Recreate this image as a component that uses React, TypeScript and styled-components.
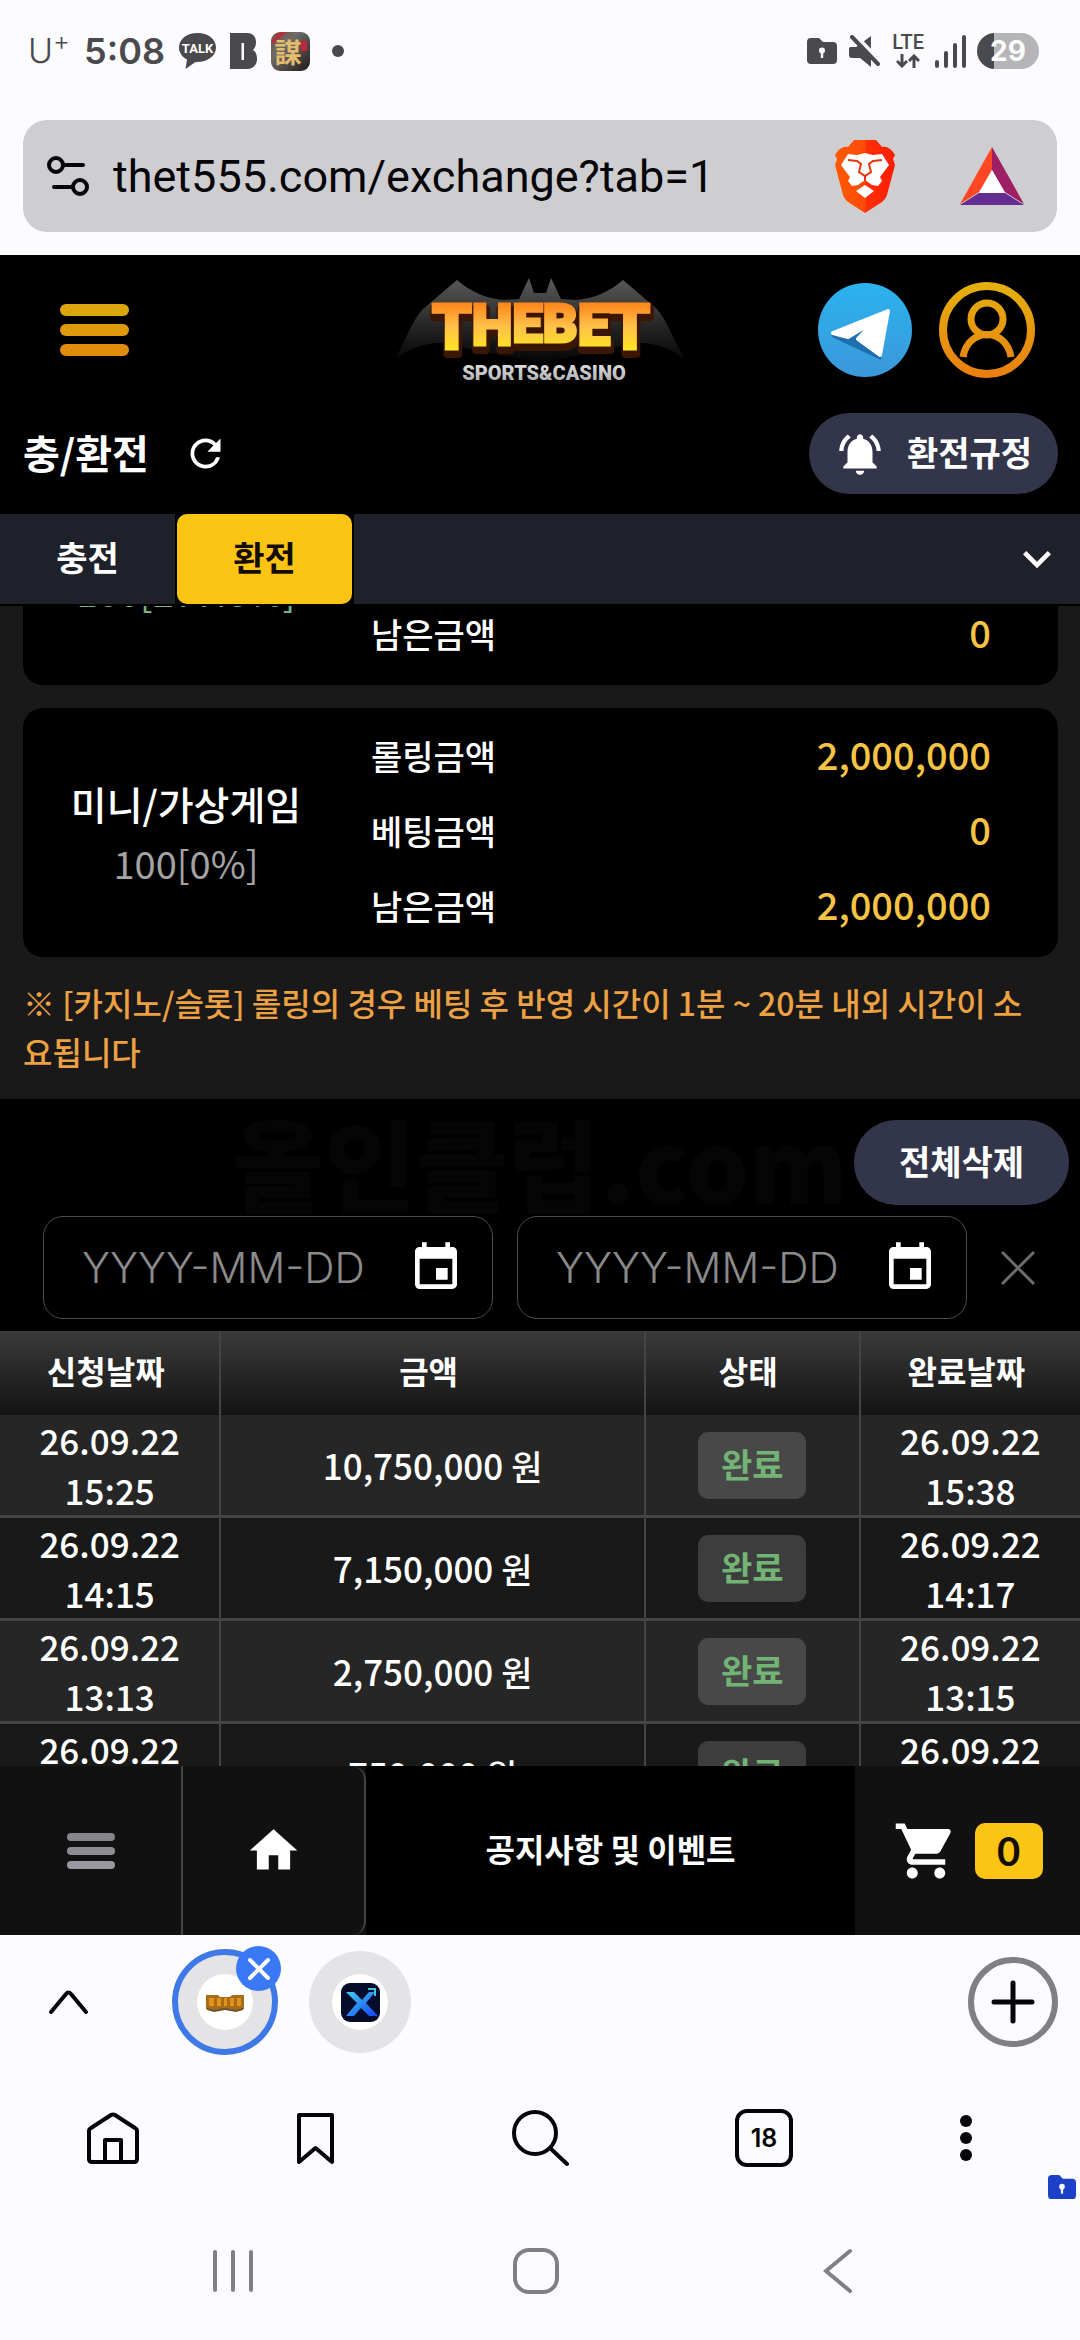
import React, { useLayoutEffect, useRef, useState } from 'react';
import styled, { createGlobalStyle } from 'styled-components';
import {
  MdEvent,
  MdExpandMore,
  MdHome,
  MdNotificationsActive,
  MdRefresh,
  MdShoppingCart,
} from 'react-icons/md';

const GlobalStyle = createGlobalStyle`
  *, *::before, *::after {
    box-sizing: border-box;
  }

  body {
    margin: 0;
    background: #fcfcfe;
    font-family: "Noto Sans CJK KR", sans-serif;
  }

  button {
    background: none;
    border: none;
    padding: 0;
    margin: 0;
    color: inherit;
    font: inherit;
    cursor: pointer;
  }

  svg {
    display: block;
    flex-shrink: 0;
  }
`;

const Screen = styled.div`
  display: flex;
  flex-direction: column;
  height: 100vh;
  overflow: hidden;
  background: #fcfcfe;
`;

/* ---------- phone status bar ---------- */

const StatusBar = styled.div`
  display: flex;
  align-items: center;
  justify-content: space-between;
  flex-shrink: 0;
  height: 102px;
  padding: 0 41px 0 28px;
  color: #4a4a4c;
  font-family: Inter, sans-serif;
`;

const StatusGroup = styled.div<{ $gap: number }>`
  display: flex;
  align-items: center;
  gap: ${props => props.$gap}px;
`;

const Carrier = styled.span`
  display: flex;
  font-size: 34px;
  font-weight: 300;
  line-height: 40px;

  sup {
    font-size: 26px;
    line-height: 20px;
    vertical-align: top;
  }
`;

const Time = styled.span`
  font-size: 36px;
  font-weight: 600;
  line-height: 40px;
`;

const Network = styled.div`
  display: flex;
  flex-direction: column;
  align-items: center;
  gap: 4px;
  font-family: Roboto, sans-serif;
  font-size: 20px;
  font-weight: 500;
  line-height: 16px;
`;

const Battery = styled.div`
  display: flex;
  align-items: center;
  justify-content: center;
  width: 62px;
  height: 36px;
  border-radius: 18px;
  background: linear-gradient(to right, #4a4a4c 28%, #b5b5b7 28%);
  color: #fcfcfe;
  font-size: 28px;
  font-weight: 700;
`;

/* ---------- browser address bar ---------- */

const AddressBar = styled.div`
  flex-shrink: 0;
  padding: 18px 23px 23px;
`;

const AddressField = styled.div`
  display: flex;
  align-items: center;
  height: 112px;
  padding: 0 33px 0 24px;
  border-radius: 24px;
  background: #cecdd0;
`;

const AddressInput = styled.input`
  flex: 1;
  min-width: 0;
  margin-left: 23px;
  padding: 0;
  border: none;
  outline: none;
  background: none;
  color: #050507;
  font-family: Roboto, sans-serif;
  font-size: 45px;
`;

const AddressActions = styled.div`
  display: flex;
  align-items: center;
  gap: 64px;
`;

/* ---------- site header ---------- */

const Site = styled.div`
  display: flex;
  flex: 1;
  flex-direction: column;
  min-height: 0;
  background: #000000;
  color: #ffffff;
`;

const SiteHeader = styled.header`
  display: grid;
  grid-template-columns: 1fr auto 1fr;
  align-items: center;
  flex-shrink: 0;
  height: 150px;
  padding: 0 44px;
`;

const Bars = styled.span<{ $large?: boolean }>`
  display: flex;
  flex-direction: column;
  gap: ${props => (props.$large ? 8 : 6)}px;
  width: ${props => (props.$large ? 69 : 48)}px;

  i {
    height: ${props => (props.$large ? 12 : 8)}px;
    border-radius: 6px;
    background: #8d8d92;
  }

  i:nth-child(1) {
    background: ${props => (props.$large ? '#dba50d' : '#85858a')};
  }

  i:nth-child(2) {
    background: ${props => (props.$large ? '#de9a0c' : '#8d8d92')};
  }

  i:nth-child(3) {
    background: ${props => (props.$large ? '#e08c0c' : '#98989e')};
  }
`;

const MenuButton = styled.button`
  justify-self: start;
  margin-left: 16px;
`;

const HeaderLinks = styled.div`
  display: flex;
  align-items: center;
  justify-self: end;
  gap: 26px;
`;

const TitleRow = styled.div`
  display: flex;
  align-items: center;
  flex-shrink: 0;
  height: 109px;
  padding: 8px 22px 20px 23px;
`;

const PageTitle = styled.h1`
  margin: 0;
  padding-bottom: 4px;
  font-size: 40px;
  font-weight: 700;
  line-height: 48px;
`;

const RefreshButton = styled.button`
  margin: 0 auto 0 34px;
`;

const Pill = styled.button<{ $width: number; $height: number }>`
  display: flex;
  align-items: center;
  justify-content: center;
  gap: 22px;
  width: ${props => props.$width}px;
  height: ${props => props.$height}px;
  border-radius: 42px;
  background: #33354a;
  color: #ffffff;
  font-size: 34px;
  font-weight: 700;

  span {
    padding-bottom: 4px;
  }
`;

const TabBar = styled.div`
  display: flex;
  gap: 2px;
  flex-shrink: 0;
  padding-bottom: 2px;
`;

const Tab = styled.button<{ $active?: boolean }>`
  width: 175px;
  height: 90px;
  padding-bottom: 6px;
  border-radius: ${props => (props.$active ? 10 : 0)}px;
  background: ${props => (props.$active ? '#fcc414' : '#1e202a')};
  color: ${props => (props.$active ? '#130d05' : '#ffffff')};
  font-size: 34px;
  font-weight: 700;
`;

const TabMore = styled.button`
  display: flex;
  flex: 1;
  align-items: center;
  justify-content: flex-end;
  padding-right: 15px;
  background: #1e202a;
`;

/* ---------- scrolled page ---------- */

const Scroller = styled.main`
  flex: 1;
  min-height: 0;
  overflow-y: auto;
  scrollbar-width: none;
`;

const RollingPanel = styled.section`
  display: flex;
  flex-direction: column;
  gap: 23px;
  padding: 23px 22px 21px 23px;
  background: #191919;
`;

const RollingCard = styled.article`
  display: flex;
  align-items: center;
  padding: 10px 67px 14px 0;
  border-radius: 20px;
  background: #000000;
`;

const RollingLabel = styled.div`
  width: 326px;
  padding-top: 4px;
  text-align: center;
  font-size: 39px;
  font-weight: 500;
  line-height: 60px;
`;

const RollingRate = styled.div<{ $complete: boolean }>`
  color: ${props => (props.$complete ? '#74b383' : '#a3a3a3')};
  font-size: 38px;
  font-weight: 400;
`;

const RollingList = styled.dl`
  flex: 1;
  margin: 0;
  padding-left: 22px;
`;

const RollingRow = styled.div`
  display: flex;
  align-items: center;
  justify-content: space-between;
  height: 75px;

  dt {
    font-size: 34px;
    font-weight: 500;
  }

  dd {
    margin: 0;
    padding-bottom: 4px;
    color: #f6c445;
    font-size: 38px;
    font-weight: 500;
  }
`;

const Notice = styled.p`
  margin: -2px 0 0;
  padding: 0 20px 2px 0;
  color: #eea143;
  font-size: 32px;
  font-weight: 500;
  line-height: 49px;
  word-break: break-all;
`;

const Filters = styled.section`
  position: relative;
  padding: 21px 11px 12px 43px;
`;

const Watermark = styled.span`
  position: absolute;
  top: 0;
  left: 232px;
  color: #050505;
  font-size: 100px;
  font-weight: 900;
  line-height: 124px;
  pointer-events: none;
`;

const FilterActions = styled.div`
  display: flex;
  justify-content: flex-end;
  position: relative;
  margin-bottom: 11px;
`;

const DateRange = styled.div`
  display: flex;
  align-items: center;
  gap: 24px;
  padding-right: 34px;
`;

const DateField = styled.label`
  display: flex;
  flex: 1;
  align-items: center;
  gap: 44px;
  min-width: 0;
  height: 103px;
  padding: 0 28px 0 38px;
  border: 1px solid #4b4b4b;
  border-radius: 20px;

  input {
    flex: 1;
    min-width: 0;
    padding: 0;
    border: none;
    outline: none;
    background: none;
    color: #ffffff;
    font-family: Inter, sans-serif;
    font-size: 42px;
    font-weight: 300;
  }

  input::placeholder {
    color: #8a8a8a;
    opacity: 1;
  }
`;

const ClearButton = styled.button`
  margin-left: 10px;
`;

const HistoryTable = styled.table`
  width: 100%;
  table-layout: fixed;
  border-collapse: separate;
  border-spacing: 0;
  text-align: center;

  th,
  td {
    padding: 0;
    border-right: 2px solid #444444;
  }

  th:last-child,
  td:last-child {
    border-right: none;
  }

  th {
    height: 84px;
    padding: 0 8px 6px 0;
    font-size: 32px;
    font-weight: 700;
  }

  thead tr {
    background: linear-gradient(#3a3a3a, #141414);
  }

  tbody tr {
    background: #191919;
  }

  tbody tr:nth-child(odd) {
    background: #262626;
  }

  td {
    height: 103px;
    border-bottom: 3px solid #454545;
    font-size: 35px;
    font-weight: 500;
    line-height: 50px;
  }
`;

const Won = styled.span`
  font-size: 34px;
  line-height: 40px;
`;

const StateBadge = styled.span`
  display: inline-block;
  width: 108px;
  padding-bottom: 4px;
  border-radius: 10px;
  background: rgba(255, 255, 255, 0.16);
  color: #72b376;
  font-size: 34px;
  font-weight: 700;
  line-height: 63px;
  vertical-align: middle;
`;

/* ---------- site bottom bar ---------- */

const BottomNav = styled.nav`
  display: flex;
  flex-shrink: 0;
  height: 169px;
  background: #111111;
`;

const BottomItem = styled.button<{ $rounded?: boolean }>`
  display: flex;
  align-items: center;
  justify-content: center;
  width: 183px;
  border-right: 2px solid #444444;
  border-radius: ${props => (props.$rounded ? '0 14px 14px 0' : '0')};
`;

const NewsLink = styled.a`
  display: flex;
  flex: 1;
  align-items: center;
  justify-content: center;
  padding-bottom: 6px;
  background: #000000;
  color: #ffffff;
  font-size: 32px;
  font-weight: 700;
  text-decoration: none;
`;

const CartButton = styled.button`
  display: flex;
  align-items: center;
  justify-content: center;
  gap: 16px;
  width: 225px;
`;

const CartCount = styled.span`
  width: 68px;
  border-radius: 10px;
  background: #fcc414;
  color: #130d05;
  font-family: Lato, sans-serif;
  font-size: 40px;
  font-weight: 700;
  line-height: 56px;
`;

/* ---------- browser tabs and toolbar ---------- */

const TabStrip = styled.div`
  display: flex;
  align-items: center;
  flex-shrink: 0;
  height: 134px;
  padding: 0 22px 0 48px;
`;

const TabThumb = styled.button<{ $current?: boolean }>`
  display: flex;
  align-items: center;
  justify-content: center;
  position: relative;
  width: ${props => (props.$current ? 106 : 102)}px;
  height: ${props => (props.$current ? 106 : 102)}px;
  margin-left: ${props => (props.$current ? 83 : 31)}px;
  border: ${props => (props.$current ? '6px solid #3f79e8' : 'none')};
  border-radius: 50%;
  background: #e4e4e6;
`;

const Favicon = styled.span`
  display: flex;
  align-items: center;
  justify-content: center;
  width: 56px;
  height: 56px;
  border-radius: 50%;
  background: #ffffff;
`;

const CloseBadge = styled.span`
  display: flex;
  align-items: center;
  justify-content: center;
  position: absolute;
  top: -9px;
  right: -9px;
  width: 45px;
  height: 45px;
  border-radius: 50%;
  background: #3b78f5;
`;

const AddTab = styled.button`
  display: flex;
  align-items: center;
  justify-content: center;
  width: 90px;
  height: 90px;
  margin-left: auto;
  border: 6px solid #808083;
  border-radius: 50%;
`;

const Toolbar = styled.nav`
  display: grid;
  grid-template-columns: 226fr 178fr 272fr 176fr 228fr;
  place-items: center;
  position: relative;
  flex-shrink: 0;
  height: 138px;
`;

const TabCount = styled.span`
  display: flex;
  align-items: center;
  justify-content: center;
  width: 58px;
  height: 58px;
  border: 4px solid #050507;
  border-radius: 12px;
  font-family: Inter, sans-serif;
  font-size: 25px;
  font-weight: 600;
`;

const SecureMark = styled.span`
  position: absolute;
  right: 4px;
  bottom: 8px;
`;

const SystemNav = styled.nav`
  display: grid;
  grid-template-columns: 384fr 303fr 393fr;
  flex-shrink: 0;
  place-items: center;
  height: 133px;
  padding-bottom: 6px;

  button:first-child {
    margin-left: 82px;
  }

  button:last-child {
    margin-right: 92px;
  }
`;

interface RollingInfo {
  name: string;
  rate: string;
  complete: boolean;
  rolling: string;
  betting: string;
  remain: string;
}

interface Exchange {
  id: number;
  requested: [string, string];
  amount: string;
  completed: [string, string];
}

const rollings: RollingInfo[] = [
  { name: '스포츠', rate: '100[277.8%]', complete: true, rolling: '2,000,000', betting: '5,556,000', remain: '0' },
  { name: '미니/가상게임', rate: '100[0%]', complete: false, rolling: '2,000,000', betting: '0', remain: '2,000,000' },
];

const exchanges: Exchange[] = [
  { id: 1, requested: ['26.09.22', '15:25'], amount: '10,750,000', completed: ['26.09.22', '15:38'] },
  { id: 2, requested: ['26.09.22', '14:15'], amount: '7,150,000', completed: ['26.09.22', '14:17'] },
  { id: 3, requested: ['26.09.22', '13:13'], amount: '2,750,000', completed: ['26.09.22', '13:15'] },
  { id: 4, requested: ['26.09.22', '12:06'], amount: '750,000', completed: ['26.09.22', '12:08'] },
];

const LockedFolder: React.FC<{ color: string; width: number }> = ({ color, width }) => (
  <svg width={width} viewBox="0 0 30 26">
    <path d="M4 0h8l4 4h10a4 4 0 0 1 4 4v14a4 4 0 0 1-4 4H4a4 4 0 0 1-4-4V4a4 4 0 0 1 4-4z" fill={color} />
    <circle cx="15" cy="12.5" r="3" fill="#fcfcfe" />
    <path d="M13.8 13h2.4v7h-2.4z" fill="#fcfcfe" />
  </svg>
);

const TalkIcon = () => (
  <svg width="37" height="36" viewBox="0 0 37 36">
    <path d="M18.500 0C8 0 0 6 0 14.500c0 5 3 9.500 8 12L6.500 36l10-7c12 .5 20.500-6 20.500-14.500S29 0 18.500 0z" fill="#4a4a4c" />
    <text x="18.500" y="20" textAnchor="middle" fontFamily="Roboto" fontWeight="700" fontSize="13" fill="#fff">TALK</text>
  </svg>
);

const BandIcon = () => (
  <svg width="27" height="36" viewBox="0 0 27 36">
    <path d="M0 0h17c6 0 9 4 9 9 0 4-1 6-3 8 3 2 4 5 4 9 0 6-4 10-10 10H0z" fill="#4a4a4c" />
    <path d="M11.500 10h2.500v17h-2.500z" fill="#fcfcfe" />
  </svg>
);

const GameIcon = () => (
  <svg width="39" height="39" viewBox="0 0 39 39">
    <defs>
      <linearGradient id="game-bg" x1="0" y1="0" x2="1" y2="1">
        <stop offset="0" stopColor="#7b4a42" />
        <stop offset="0.350" stopColor="#6f6c66" />
        <stop offset="1" stopColor="#1d1a1a" />
      </linearGradient>
    </defs>
    <rect width="39" height="39" rx="9" fill="url(#game-bg)" />
    <path d="M0 9l9-9h7L1 12z" fill="#b3303a" />
    <rect x="30" y="9" width="6" height="10" fill="#c3263b" />
    <text x="17" y="31" textAnchor="middle" fontFamily="Noto Sans CJK JP" fontWeight="700" fontSize="27" fill="#e3bd6f">謀</text>
  </svg>
);

const MuteIcon = () => (
  <svg width="33" height="33" viewBox="0 0 33 33">
    <path d="M2 12h6l15-11v31l-11-9H4a3 3 0 0 1-3-3v-5a3 3 0 0 1 1-3z" fill="#4a4a4c" />
    <path d="M7 0l26 27" stroke="#fcfcfe" strokeWidth="4" />
    <path d="M4 2l26 27" stroke="#4a4a4c" strokeWidth="4" strokeLinecap="round" />
  </svg>
);

const SiteSettingsIcon = () => (
  <svg width="43" height="42" viewBox="0 0 43 42" fill="none" stroke="#050507" strokeWidth="4" strokeLinecap="round">
    <circle cx="9" cy="10" r="7" />
    <path d="M18 10h18M7 32h17" />
    <circle cx="33" cy="32" r="7" />
  </svg>
);

const BraveIcon = () => (
  <svg width="62" height="73" viewBox="0 0 62 73">
    <defs>
      <linearGradient id="brave" x1="0" x2="1" y1="0" y2="0">
        <stop offset="0" stopColor="#ff5a00" />
        <stop offset="0.500" stopColor="#ff4a0a" />
        <stop offset="0.520" stopColor="#ff2f08" />
        <stop offset="1" stopColor="#ff1c00" />
      </linearGradient>
    </defs>
    <path
      d="M20 0h22l6 7c4-1 8 1 11 5l2 3-2 4 2 6-8 30c-1 3-3 5-5 7L31 73 14 62c-2-2-4-4-5-7L1 25l2-6-2-4 2-3c3-4 7-6 11-5z"
      fill="url(#brave)"
    />
    <path
      d="M14 14l9 1 8-2 8 2 9-1 7 11-9 12 2 4-4 5-6-1-7-5-7 5-6 1-4-5 2-4L7 25z"
      fill="#fff"
    />
    <path d="M31 45l9 6-9 7-9-7z" fill="#fff" />
    <path d="M14 20l9 1 4 3-2 8 6 4 6-4-2-8 4-3 9-1" fill="none" stroke="#e8360c" strokeWidth="2" />
    <path d="M31 36v5" stroke="#e8360c" strokeWidth="2" />
  </svg>
);

const RewardsIcon = () => (
  <svg width="64" height="58" viewBox="0 0 64 58">
    <path d="M32 0L0 57l19-12 13-22z" fill="#ff4724" />
    <path d="M32 0l32 57-19-12-13-22z" fill="#9e1f63" />
    <path d="M0 58h64L45 46H19z" fill="#662d91" />
    <path d="M32 23l13 23H19z" fill="#fff" />
  </svg>
);

// Outer letters are larger, so the word bows downwards at both ends
const LogoWord = () => (
  <>
    <tspan fontSize="63">T</tspan>
    <tspan fontSize="58" dy="-4">H</tspan>
    <tspan fontSize="54" dy="-3">E</tspan>
    <tspan fontSize="54">B</tspan>
    <tspan fontSize="58" dy="3">E</tspan>
    <tspan fontSize="63" dy="4">T</tspan>
  </>
);

const Logo = () => (
  <svg width="290" height="106" viewBox="0 0 290 106" role="img" aria-label="THEBET SPORTS&amp;CASINO">
    <defs>
      <linearGradient id="wing" x1="0" y1="0" x2="0" y2="1">
        <stop offset="0" stopColor="#5a5a5a" />
        <stop offset="0.600" stopColor="#222222" />
        <stop offset="1" stopColor="#040404" />
      </linearGradient>
      <linearGradient id="gold" gradientUnits="userSpaceOnUse" x1="0" y1="22" x2="0" y2="76">
        <stop offset="0" stopColor="#ff7a10" />
        <stop offset="0.500" stopColor="#ffc04a" />
        <stop offset="1" stopColor="#ffe81f" />
      </linearGradient>
      <linearGradient id="steel" x1="0" y1="0" x2="0" y2="1">
        <stop offset="0" stopColor="#e6e6e6" />
        <stop offset="1" stopColor="#a5a5a8" />
      </linearGradient>
    </defs>
    <path
      d="M0 82C12 60 18 42 28 32L62 3c14 12 28 18 46 20l16-1 10-21 5 15h12l5-15 10 21 16 1c18-2 32-8 46-20l34 29c10 12 16 30 28 50-14-10-32-17-46-16l-99 20-99-20C32 65 14 72 0 82z"
      fill="url(#wing)"
    />
    <text
      x="147"
      y="77"
      textAnchor="middle"
      fontFamily="Roboto"
      fontWeight="900"
      stroke="#3a1603"
      strokeWidth="8"
      strokeLinejoin="round"
      fill="#3a1603"
      aria-hidden="true"
    >
      <LogoWord />
    </text>
    <text
      x="146"
      y="72"
      textAnchor="middle"
      fontFamily="Roboto"
      fontWeight="900"
      stroke="url(#gold)"
      strokeWidth="3"
      fill="url(#gold)"
    >
      <LogoWord />
    </text>
    <text
      x="149"
      y="103"
      textAnchor="middle"
      fontFamily="Roboto"
      fontWeight="900"
      fontSize="20"
      stroke="#000"
      strokeWidth="5"
      paintOrder="stroke"
      fill="url(#steel)"
    >
      SPORTS&amp;CASINO
    </text>
  </svg>
);

const TelegramIcon = () => (
  <svg width="94" height="94" viewBox="0 0 94 94">
    <defs>
      <linearGradient id="telegram" x1="0" y1="0" x2="0" y2="1">
        <stop offset="0" stopColor="#2bb3ee" />
        <stop offset="1" stopColor="#3a98da" />
      </linearGradient>
    </defs>
    <circle cx="47" cy="47" r="47" fill="url(#telegram)" />
    <path
      d="M15 53l15 4 26-18-16 19 22 17z"
      fill="#1f6fb0"
      stroke="#1f6fb0"
      strokeWidth="3"
      strokeLinejoin="round"
    />
    <path
      d="M15 50l55-22-8 44-22-16 18-19-28 17z"
      fill="#fff"
      stroke="#fff"
      strokeWidth="4"
      strokeLinejoin="round"
    />
  </svg>
);

const ProfileIcon = () => (
  <svg width="98" height="98" viewBox="0 0 98 98" fill="none">
    <defs>
      <linearGradient id="profile" gradientUnits="userSpaceOnUse" x1="0" y1="0" x2="0" y2="98">
        <stop offset="0" stopColor="#e3b20e" />
        <stop offset="1" stopColor="#ea7d10" />
      </linearGradient>
    </defs>
    <g stroke="url(#profile)">
      <circle cx="49" cy="49" r="44" strokeWidth="8" />
      <circle cx="49" cy="38" r="16" strokeWidth="7" />
      <path d="M25 76C30 46 68 46 73 76" strokeWidth="7" />
    </g>
  </svg>
);

function App() {
  const scroller = useRef<HTMLElement>(null);
  const [tab, setTab] = useState(1);
  const [from, setFrom] = useState('');
  const [to, setTo] = useState('');

  useLayoutEffect(() => {
    if (scroller.current) {
      scroller.current.scrollTop = 193;
    }
  }, []);

  return (
    <Screen>
      <GlobalStyle />

      <StatusBar>
        <StatusGroup $gap={14}>
          <Carrier>U<sup>+</sup></Carrier>
          <Time>5:08</Time>
          <TalkIcon />
          <BandIcon />
          <GameIcon />
          <svg width="36" height="12" viewBox="0 0 36 12"><circle cx="14" cy="6" r="6" fill="#4a4a4c" /></svg>
        </StatusGroup>
        <StatusGroup $gap={11}>
          <LockedFolder color="#4a4a4c" width={30} />
          <MuteIcon />
          <Network>
            LTE
            <svg width="24" height="14" viewBox="0 0 24 14" fill="none" stroke="#4a4a4c" strokeWidth="3">
              <path d="M6 0v12M1 7l5 5 5-5M18 14V2M13 7l5-5 5 5" />
            </svg>
          </Network>
          <svg width="31" height="33" viewBox="0 0 31 33" stroke="#4a4a4c" strokeWidth="4" strokeLinecap="round">
            <path d="M2 27v4M11 18v13M20 10v21M29 2v29" />
          </svg>
          <Battery>29</Battery>
        </StatusGroup>
      </StatusBar>

      <AddressBar>
        <AddressField>
          <SiteSettingsIcon />
          <AddressInput aria-label="주소" defaultValue="thet555.com/exchange?tab=1" />
          <AddressActions>
            <button aria-label="Brave Shields"><BraveIcon /></button>
            <button aria-label="Brave Rewards"><RewardsIcon /></button>
          </AddressActions>
        </AddressField>
      </AddressBar>

      <Site>
        <SiteHeader>
          <MenuButton aria-label="메뉴">
            <Bars $large><i /><i /><i /></Bars>
          </MenuButton>
          <Logo />
          <HeaderLinks>
            <button aria-label="텔레그램"><TelegramIcon /></button>
            <button aria-label="내 정보"><ProfileIcon /></button>
          </HeaderLinks>
        </SiteHeader>

        <TitleRow>
          <PageTitle>충/환전</PageTitle>
          <RefreshButton aria-label="새로고침"><MdRefresh size={45} /></RefreshButton>
          <Pill $width={249} $height={81}>
            <MdNotificationsActive size={50} />
            <span>환전규정</span>
          </Pill>
        </TitleRow>

        <TabBar>
          <Tab $active={tab === 0} onClick={() => setTab(0)}>충전</Tab>
          <Tab $active={tab === 1} onClick={() => setTab(1)}>환전</Tab>
          <TabMore aria-label="더보기"><MdExpandMore size={56} /></TabMore>
        </TabBar>

        <Scroller ref={scroller}>
          <RollingPanel>
            {rollings.map(item => (
              <RollingCard key={item.name}>
                <RollingLabel>
                  {item.name}
                  <RollingRate $complete={item.complete}>{item.rate}</RollingRate>
                </RollingLabel>
                <RollingList>
                  <RollingRow><dt>롤링금액</dt><dd>{item.rolling}</dd></RollingRow>
                  <RollingRow><dt>베팅금액</dt><dd>{item.betting}</dd></RollingRow>
                  <RollingRow><dt>남은금액</dt><dd>{item.remain}</dd></RollingRow>
                </RollingList>
              </RollingCard>
            ))}
            <Notice>
              ※ [카지노/슬롯] 롤링의 경우 베팅 후 반영 시간이 1분 ~ 20분 내외 시간이 소요됩니다
            </Notice>
          </RollingPanel>

          <Filters>
            <Watermark aria-hidden="true">올인클럽.com</Watermark>
            <FilterActions>
              <Pill $width={215} $height={85}><span>전체삭제</span></Pill>
            </FilterActions>
            <DateRange>
              <DateField>
                <input
                  aria-label="시작일"
                  placeholder="YYYY-MM-DD"
                  value={from}
                  onChange={e => setFrom(e.target.value)}
                />
                <MdEvent size={56} />
              </DateField>
              <DateField>
                <input
                  aria-label="종료일"
                  placeholder="YYYY-MM-DD"
                  value={to}
                  onChange={e => setTo(e.target.value)}
                />
                <MdEvent size={56} />
              </DateField>
              <ClearButton aria-label="지우기" onClick={() => { setFrom(''); setTo(''); }}>
                <svg width="34" height="34" viewBox="0 0 34 34" stroke="#6c6c6c" strokeWidth="3">
                  <path d="M1 1l32 32M33 1L1 33" />
                </svg>
              </ClearButton>
            </DateRange>
          </Filters>

          <HistoryTable>
            <colgroup>
              <col width="20.500%" />
              <col width="39.300%" />
              <col width="19.900%" />
              <col />
            </colgroup>
            <thead>
              <tr>
                <th>신청날짜</th>
                <th>금액</th>
                <th>상태</th>
                <th>완료날짜</th>
              </tr>
            </thead>
            <tbody>
              {exchanges.map(row => (
                <tr key={row.id}>
                  <td>{row.requested[0]}<br />{row.requested[1]}</td>
                  <td>{row.amount} <Won>원</Won></td>
                  <td><StateBadge>완료</StateBadge></td>
                  <td>{row.completed[0]}<br />{row.completed[1]}</td>
                </tr>
              ))}
            </tbody>
          </HistoryTable>
        </Scroller>

        <BottomNav>
          <BottomItem aria-label="전체 메뉴">
            <Bars><i /><i /><i /></Bars>
          </BottomItem>
          <BottomItem $rounded aria-label="홈"><MdHome size={57} /></BottomItem>
          <NewsLink href="#news">공지사항 및 이벤트</NewsLink>
          <CartButton aria-label="장바구니">
            <MdShoppingCart size={66} />
            <CartCount>0</CartCount>
          </CartButton>
        </BottomNav>
      </Site>

      <TabStrip>
        <button aria-label="탭 목록">
          <svg width="41" height="26" viewBox="0 0 41 26" fill="none" stroke="#050507" strokeWidth="4" strokeLinecap="round">
            <path d="M3 23L18 5q2.500-3 5 0l15 18" />
          </svg>
        </button>
        <TabThumb $current aria-label="THEBET">
          <Favicon>
            <svg width="40" height="19" viewBox="0 0 40 19">
              <path d="M1 2h12l2 2h10l2-2h12v14l-6 2-13-2-13 2-6-2z" fill="#a86c18" />
              <path d="M4 5h5v8H4zM12 5h4v8h-4zM19 5h3v8h-3zM25 5h4v8h-4zM32 5h4v8h-4z" fill="#e0921c" />
              <path d="M2 15l7 2 11-2 11 2 7-2v2l-7 2-11-2-11 2-7-2z" fill="#6b5236" />
            </svg>
          </Favicon>
          <CloseBadge>
            <svg width="24" height="24" viewBox="0 0 24 24" stroke="#fff" strokeWidth="4" strokeLinecap="round">
              <path d="M3 3l18 18M21 3L3 21" />
            </svg>
          </CloseBadge>
        </TabThumb>
        <TabThumb aria-label="X">
          <Favicon>
            <svg width="39" height="39" viewBox="0 0 39 39">
              <defs>
                <linearGradient id="x-mark" x1="0" y1="0" x2="1" y2="1">
                  <stop offset="0" stopColor="#3fd0f5" />
                  <stop offset="1" stopColor="#1440f0" />
                </linearGradient>
              </defs>
              <rect width="39" height="39" rx="9" fill="#050d2b" />
              <path d="M5 9h8l8 8 7-8h6L25 20l12 13h-9l-8-8-7 8H5l11-13z" fill="url(#x-mark)" />
              <path d="M27 6h7v7" fill="none" stroke="#3ec6e0" strokeWidth="2" />
            </svg>
          </Favicon>
        </TabThumb>
        <AddTab aria-label="새 탭">
          <svg width="44" height="44" viewBox="0 0 44 44" stroke="#050507" strokeWidth="5" strokeLinecap="round">
            <path d="M22 3v38M3 22h38" />
          </svg>
        </AddTab>
      </TabStrip>

      <Toolbar>
        <button aria-label="홈페이지">
          <svg width="52" height="52" viewBox="0 0 52 52" fill="none" stroke="#050507" strokeWidth="4" strokeLinejoin="round">
            <path d="M4 16q-2 1-2 3v28q0 3 3 3h42q3 0 3-3V19q0-2-2-3L28 3q-2-1-4 0zM18 50V28h16v22" />
          </svg>
        </button>
        <button aria-label="북마크">
          <svg width="37" height="52" viewBox="0 0 37 52" fill="none" stroke="#050507" strokeWidth="4" strokeLinejoin="round">
            <path d="M2 50V3h33v47L18.500 36z" />
          </svg>
        </button>
        <button aria-label="검색">
          <svg width="58" height="58" viewBox="0 0 58 58" fill="none" stroke="#050507" strokeWidth="4" strokeLinecap="round">
            <circle cx="24" cy="24" r="21" />
            <path d="M39 39l17 16" />
          </svg>
        </button>
        <button aria-label="탭 18개"><TabCount>18</TabCount></button>
        <button aria-label="더보기">
          <svg width="12" height="46" viewBox="0 0 12 46" fill="#050507">
            <circle cx="6" cy="6" r="6" />
            <circle cx="6" cy="23" r="6" />
            <circle cx="6" cy="40" r="6" />
          </svg>
        </button>
        <SecureMark><LockedFolder color="#1d40c8" width={28} /></SecureMark>
      </Toolbar>

      <SystemNav>
        <button aria-label="최근 앱">
          <svg width="42" height="44" viewBox="0 0 42 44" stroke="#808083" strokeWidth="4" strokeLinecap="round">
            <path d="M3 3v38M21 3v38M39 3v38" />
          </svg>
        </button>
        <button aria-label="홈 화면">
          <svg width="46" height="46" viewBox="0 0 46 46" fill="none" stroke="#808083" strokeWidth="4">
            <rect x="2" y="2" width="42" height="42" rx="14" />
          </svg>
        </button>
        <button aria-label="뒤로">
          <svg width="30" height="46" viewBox="0 0 30 46" fill="none" stroke="#808083" strokeWidth="4" strokeLinecap="round">
            <path d="M27 3L3 23l24 20" />
          </svg>
        </button>
      </SystemNav>
    </Screen>
  );
}

export default App;
